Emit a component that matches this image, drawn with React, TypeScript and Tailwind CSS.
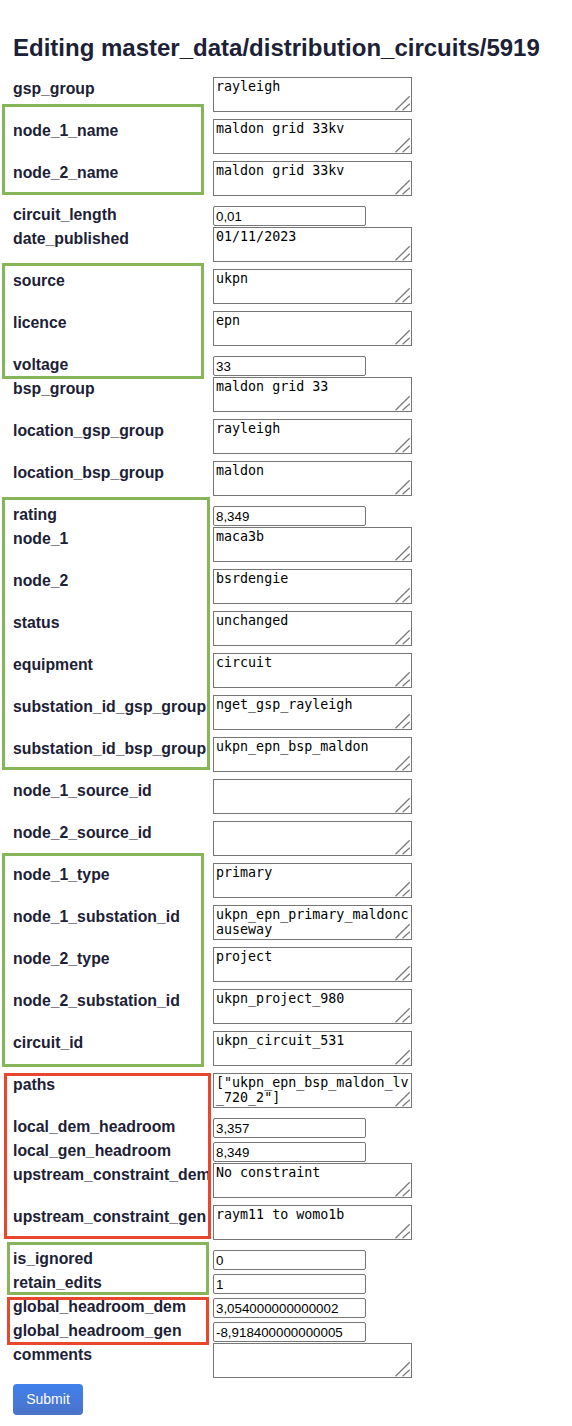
type Field = { name: string; value: string; kind: "text" | "line" };

const fields: Field[] = [
  { name: "gsp_group", value: "rayleigh", kind: "text" },
  { name: "node_1_name", value: "maldon grid 33kv", kind: "text" },
  { name: "node_2_name", value: "maldon grid 33kv", kind: "text" },
  { name: "circuit_length", value: "0,01", kind: "line" },
  { name: "date_published", value: "01/11/2023", kind: "text" },
  { name: "source", value: "ukpn", kind: "text" },
  { name: "licence", value: "epn", kind: "text" },
  { name: "voltage", value: "33", kind: "line" },
  { name: "bsp_group", value: "maldon grid 33", kind: "text" },
  { name: "location_gsp_group", value: "rayleigh", kind: "text" },
  { name: "location_bsp_group", value: "maldon", kind: "text" },
  { name: "rating", value: "8,349", kind: "line" },
  { name: "node_1", value: "maca3b", kind: "text" },
  { name: "node_2", value: "bsrdengie", kind: "text" },
  { name: "status", value: "unchanged", kind: "text" },
  { name: "equipment", value: "circuit", kind: "text" },
  { name: "substation_id_gsp_group", value: "nget_gsp_rayleigh", kind: "text" },
  { name: "substation_id_bsp_group", value: "ukpn_epn_bsp_maldon", kind: "text" },
  { name: "node_1_source_id", value: "", kind: "text" },
  { name: "node_2_source_id", value: "", kind: "text" },
  { name: "node_1_type", value: "primary", kind: "text" },
  { name: "node_1_substation_id", value: "ukpn_epn_primary_maldoncauseway", kind: "text" },
  { name: "node_2_type", value: "project", kind: "text" },
  { name: "node_2_substation_id", value: "ukpn_project_980", kind: "text" },
  { name: "circuit_id", value: "ukpn_circuit_531", kind: "text" },
  { name: "paths", value: '["ukpn_epn_bsp_maldon_lv_720_2"]', kind: "text" },
  { name: "local_dem_headroom", value: "3,357", kind: "line" },
  { name: "local_gen_headroom", value: "8,349", kind: "line" },
  { name: "upstream_constraint_dem", value: "No constraint", kind: "text" },
  { name: "upstream_constraint_gen", value: "raym11 to womo1b", kind: "text" },
  { name: "is_ignored", value: "0", kind: "line" },
  { name: "retain_edits", value: "1", kind: "line" },
  { name: "global_headroom_dem", value: "3,054000000000002", kind: "line" },
  { name: "global_headroom_gen", value: "-8,918400000000005", kind: "line" },
  { name: "comments", value: "", kind: "text" },
];

// review annotations drawn over the form
const marks = [
  { color: "border-[#86b55a]", cls: "left-[2px] top-[104px] w-[202px] h-[91px]" },
  { color: "border-[#86b55a]", cls: "left-[2px] top-[263px] w-[202px] h-[116px]" },
  { color: "border-[#86b55a]", cls: "left-[2px] top-[497px] w-[208px] h-[273px]" },
  { color: "border-[#86b55a]", cls: "left-[2px] top-[853px] w-[202px] h-[214px]" },
  { color: "border-[#e8472e]", cls: "left-[4px] top-[1073px] w-[207px] h-[166px]" },
  { color: "border-[#86b55a]", cls: "left-[7px] top-[1242px] w-[202px] h-[53px]" },
  { color: "border-[#e8472e]", cls: "left-[7px] top-[1297px] w-[202px] h-[48px]" },
];

function Grip() {
  return (
    <svg
      className="pointer-events-none absolute right-[1px] bottom-[1px]"
      width="16"
      height="16"
      viewBox="0 0 16 16"
    >
      <line x1="0.5" y1="15.3" x2="14.7" y2="1.3" stroke="#7c7c7c" strokeWidth="1.3" />
      <line x1="7.6" y1="15.3" x2="14.7" y2="8.8" stroke="#7c7c7c" strokeWidth="1.3" />
    </svg>
  );
}

function Row({ field }: { field: Field }) {
  const isText = field.kind === "text";
  return (
    <div className={`flex items-start ${isText ? "h-[42px]" : "h-[24px]"}`}>
      <label className="w-[200px] shrink-0 whitespace-nowrap text-[15.8px] leading-6 font-bold text-[#1c2136]">
        {field.name}
      </label>
      {isText ? (
        <div className="relative h-[35px] w-[199px] shrink-0">
          <textarea
            defaultValue={field.value}
            className="block h-full w-full resize-none overflow-hidden border border-[#767676] bg-white p-[2px] font-['DejaVu_Sans_Mono',monospace] text-[13.33px] leading-[14.5px] text-black"
          />
          <Grip />
        </div>
      ) : (
        <input
          defaultValue={field.value}
          className="mt-[3px] h-[20px] w-[153px] shrink-0 rounded-[2px] border border-[#767676] bg-white px-[2px] font-['Liberation_Sans',Arial,sans-serif] text-[13.33px] text-black"
        />
      )}
    </div>
  );
}

export default function App() {
  return (
    <div className="relative min-h-[1426px] w-[572px] bg-white px-[13px] pt-[34px] font-['Liberation_Sans',Arial,sans-serif]">
      <h1 className="mb-[15px] text-[24px] leading-[28px] font-bold text-[#1c2136]">
        Editing master_data/distribution_circuits/5919
      </h1>
      <form>
        {fields.map((f) => (
          <Row key={f.name} field={f} />
        ))}
        <button
          type="button"
          className="mt-[-1px] h-[31px] w-[70px] rounded-[4px] bg-linear-to-b from-[#3f81ee] to-[#4b72c7] text-[14px] text-white"
        >
          Submit
        </button>
      </form>
      {marks.map((m, i) => (
        <div key={i} className={`pointer-events-none absolute border-[3px] ${m.color} ${m.cls}`} />
      ))}
    </div>
  );
}
